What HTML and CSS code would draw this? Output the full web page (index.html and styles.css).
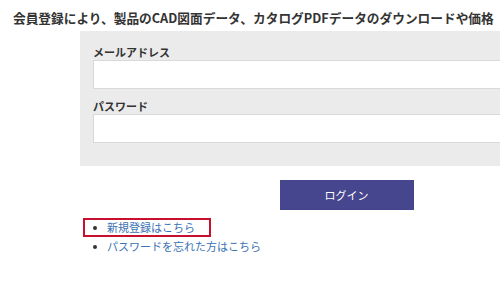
FILE: index.html
```html
<!doctype html>
<html>
<head>
<meta charset="utf-8">
<link rel="stylesheet" href="styles.css">
<title>ログイン</title>
</head>
<body>
<p class="lead">会員登録により、製品のCAD図面データ、カタログPDFデータのダウンロードや価格</p>

<form class="login">
  <div class="login-box">
    <label class="field-label" for="mail">メールアドレス</label>
    <input class="field" id="mail" type="text">
    <label class="field-label" for="pass">パスワード</label>
    <input class="field" id="pass" type="password">
  </div>
  <div class="actions">
    <button class="btn" type="button">ログイン</button>
  </div>
</form>

<ul class="links">
  <li class="hl"><a href="#">新規登録はこちら</a></li>
  <li><a href="#">パスワードを忘れた方はこちら</a></li>
</ul>
</body>
</html>
```

FILE: styles.css
```css
html,
body {
    margin: 0;
    padding: 0;
}
body {
    font-family: "Noto Sans CJK JP", "Noto Sans", sans-serif;
    color: #333;
    background-color: white;
    overflow: hidden;
}
a {
    color: #3a72b4;
    text-decoration: none;
}
.lead {
    margin: 8px 0 0;
    padding-left: 13px;
    font-size: 12.7px;
    font-weight: bold;
    line-height: 20px;
    white-space: nowrap;
}
.login {
    margin: 3px 0 0 80px;
    width: 533px;
}
.login-box {
    background-color: #ebebeb;
    padding: 13px 13px 23px;
}
.field-label {
    display: block;
    font-size: 11px;
    font-weight: bold;
    line-height: 16px;
    color: #333;
}
.field {
    display: block;
    box-sizing: border-box;
    width: 100%;
    height: 29px;
    margin: 0;
    border: 1px solid #d9d9d9;
    background-color: white;
}
.field + .field-label {
    margin-top: 9px;
}
.actions {
    margin-top: 14px;
    text-align: center;
}
.btn {
    width: 134px;
    height: 30px;
    border: 0;
    background-color: #46468e;
    color: white;
    font-family: inherit;
    font-size: 11px;
}
.links {
    list-style: none;
    margin: 8px 0 0;
    padding: 0 0 0 83px;
    font-size: 11px;
    line-height: 15px;
}
.links li {
    display: flex;
    align-items: center;
    width: max-content;
    padding: 0 14px 0 8px;
    border: 2px solid transparent;
}
.links li::before {
    content: "";
    width: 4px;
    height: 4px;
    margin-right: 10px;
    border-radius: 50%;
    background-color: #333;
}
.links li.hl {
    border-color: #c8102e;
}
```
